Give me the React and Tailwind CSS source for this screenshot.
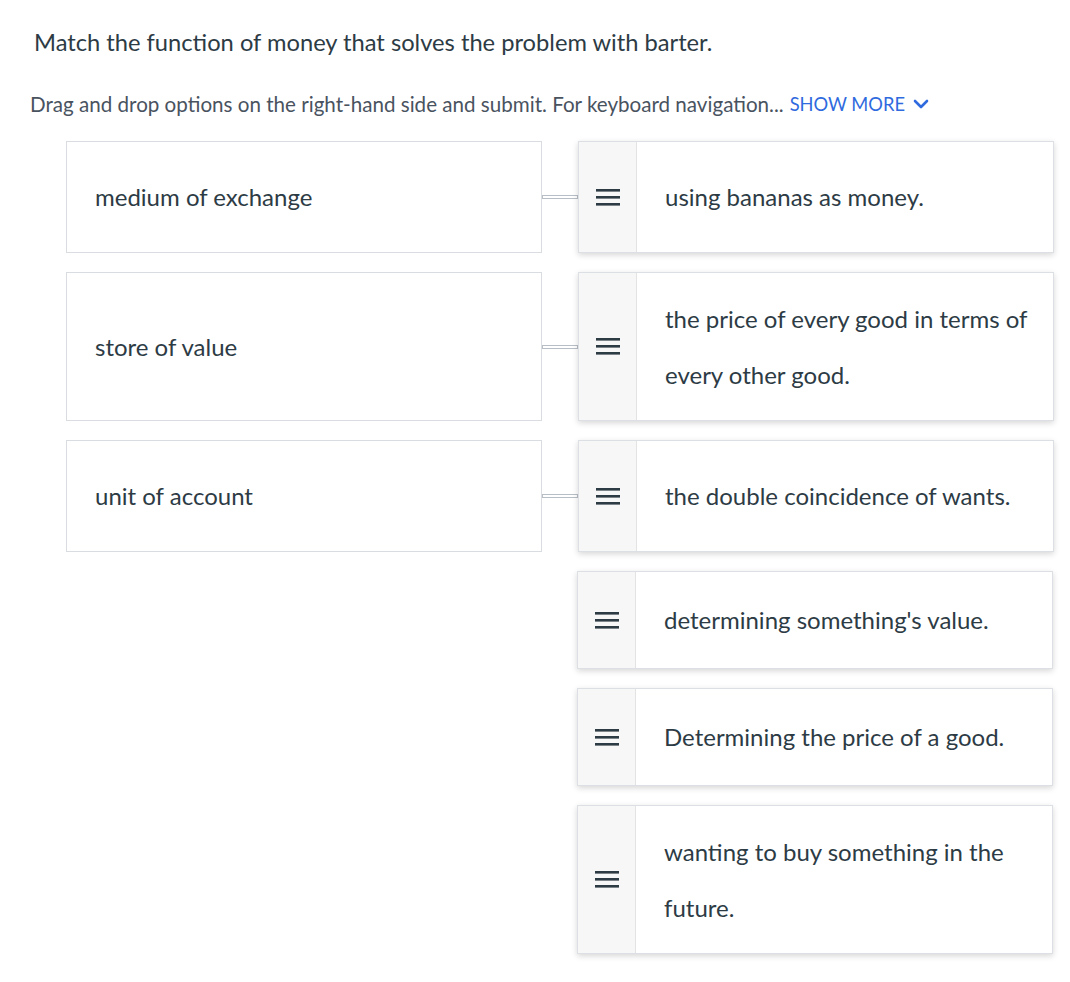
import React from "react";

const font = { fontFamily: "Lato, 'Noto Sans', sans-serif" };

function Handle() {
  return (
    <div className="flex w-[58px] shrink-0 items-center justify-center self-stretch border-r border-[#e3e3e3] bg-[#f7f7f7]">
      <svg width="24" height="17" viewBox="0 0 24 17">
        <rect x="0" y="0" width="24" height="2.6" fill="#2d3b45" />
        <rect x="0" y="7" width="24" height="2.6" fill="#2d3b45" />
        <rect x="0" y="14" width="24" height="2.6" fill="#2d3b45" />
      </svg>
    </div>
  );
}

function Card({ lines, h }) {
  return (
    <div
      className={`flex w-[476px] ${h} border border-[#dcdfe3] bg-white shadow-[0_2px_6px_rgba(0,0,0,0.16)]`}
    >
      <Handle />
      <div className="flex flex-col justify-center pl-[28px] text-[24px] leading-[56px] text-[#2d3b45]">
        {lines.map((l, i) => (
          <div key={i}>{l}</div>
        ))}
      </div>
    </div>
  );
}

function Left({ text, h }) {
  return (
    <div className={`flex w-[476px] ${h} items-center border border-[#d9dde2] bg-white pl-[28px] text-[24px] text-[#2d3b45]`}>
      {text}
    </div>
  );
}

function Connector() {
  return (
    <div className="flex w-[36px] items-center">
      <div className="h-[4px] w-full border border-[#b7bec6] bg-white" />
    </div>
  );
}

export default function App() {
  const matched = [
    { left: "medium of exchange", right: ["using bananas as money."], h: "h-[112px]" },
    { left: "store of value", right: ["the price of every good in terms of", "every other good."], h: "h-[149px]" },
    { left: "unit of account", right: ["the double coincidence of wants."], h: "h-[112px]" },
  ];
  const rest = [
    { right: ["determining something's value."], h: "h-[98px]" },
    { right: ["Determining the price of a good."], h: "h-[98px]" },
    { right: ["wanting to buy something in the", "future."], h: "h-[149px]" },
  ];
  return (
    <div className="min-h-[982px] w-[1070px] bg-white" style={font}>
      <div className="pl-[34px] pt-[27px] text-[23.7px] leading-[30px] text-[#2d3b45]">
        Match the function of money that solves the problem with barter.
      </div>
      <div className="mt-[34px] flex items-center pl-[30px] text-[20.6px] leading-[26px] text-[#49535f]">
        <span>Drag and drop options on the right-hand side and submit. For keyboard navigation...</span>
        <span className="ml-[6px] flex items-center text-[18.3px] text-[#2f6ade]">
          SHOW MORE
          <svg className="ml-[8px]" width="16" height="10" viewBox="0 0 16 10">
            <path d="M2 2 L8 8 L14 2" fill="none" stroke="#2f6ade" strokeWidth="2.6" strokeLinecap="round" strokeLinejoin="round" />
          </svg>
        </span>
      </div>
      <div className="mt-[24px] flex flex-col gap-[19px] pl-[66px]">
        {matched.map((m, i) => (
          <div key={i} className="flex">
            <Left text={m.left} h={m.h} />
            <Connector />
            <Card lines={m.right} h={m.h} />
          </div>
        ))}
        {rest.map((m, i) => (
          <div key={i} className="flex pl-[511px]">
            <Card lines={m.right} h={m.h} />
          </div>
        ))}
      </div>
    </div>
  );
}
